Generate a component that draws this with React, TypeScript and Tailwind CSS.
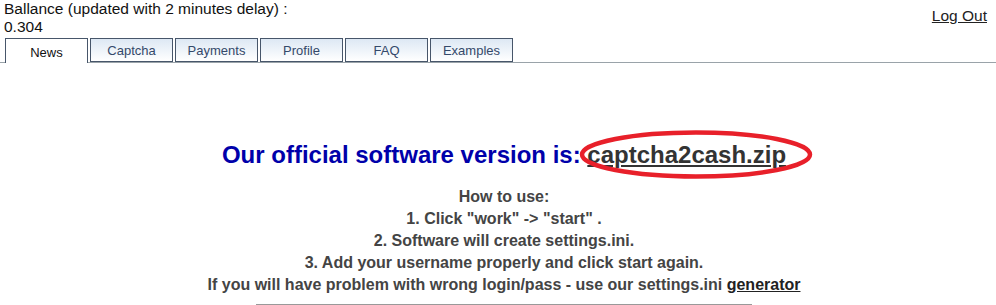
import React from "react";

const tabs = ["News", "Captcha", "Payments", "Profile", "FAQ", "Examples"];

export default function App() {
  return (
    <div className="w-[996px] h-[305px] overflow-hidden bg-white text-black" style={{ fontFamily: '"Liberation Sans", Arial, sans-serif' }}>
      <div className="flex justify-between">
        <div className="pl-[4px] text-[15.5px] leading-[18px] text-[#111]">
          <div>Ballance (updated with 2 minutes delay) :</div>
          <div>0.304</div>
        </div>
        <a href="#" className="mt-[7px] mr-[9px] text-[15.5px] leading-[18px] text-[#222] underline">Log Out</a>
      </div>
      <div className="mt-[2px] flex items-end gap-[2px] border-b border-[#9aa3a9] pl-[5px] h-[25px]">
        {tabs.map((t, i) =>
          i === 0 ? (
            <div key={t} className="w-[83px] h-[25px] -mb-px border border-b-0 border-[#47566a] bg-white flex items-center justify-center text-[13px] text-[#111] pt-[4px]">
              {t}
            </div>
          ) : (
            <div key={t} className="w-[83px] h-[24px] border border-[#47566a] bg-gradient-to-b from-[#dde8f4] to-white flex items-center justify-center text-[13px] text-[#34496a] pt-[2px]">
              {t}
            </div>
          )
        )}
      </div>
      <div className="mt-[78px] pl-[12px] flex flex-col items-center">
        <div className="relative text-[24px] leading-[28px] font-bold">
          <span className="text-[#0000aa]">Our official software version is: </span>
          <a href="#" className="relative text-[#333] underline">
            captcha2cash.zip
            <svg className="absolute left-[-8px] top-[-13px] pointer-events-none" width="236" height="54" viewBox="0 0 236 54">
              <ellipse cx="117" cy="26.5" rx="114" ry="22" fill="none" stroke="#e8202a" strokeWidth="4.5" />
            </svg>
          </a>
        </div>
        <div className="mt-[17px] text-[16px] leading-[22px] font-bold text-[#444] text-center">
          <div>How to use:</div>
          <div>1. Click "work" -&gt; "start" .</div>
          <div>2. Software will create settings.ini.</div>
          <div>3. Add your username properly and click start again.</div>
          <div>
            If you will have problem with wrong login/pass - use our settings.ini{" "}
            <a href="#" className="underline text-[#222]">generator</a>
          </div>
        </div>
        <div className="mt-[8px] w-[496px] h-[2px] border-t border-[#999] border-b border-b-[#eee]" />
      </div>
    </div>
  );
}
